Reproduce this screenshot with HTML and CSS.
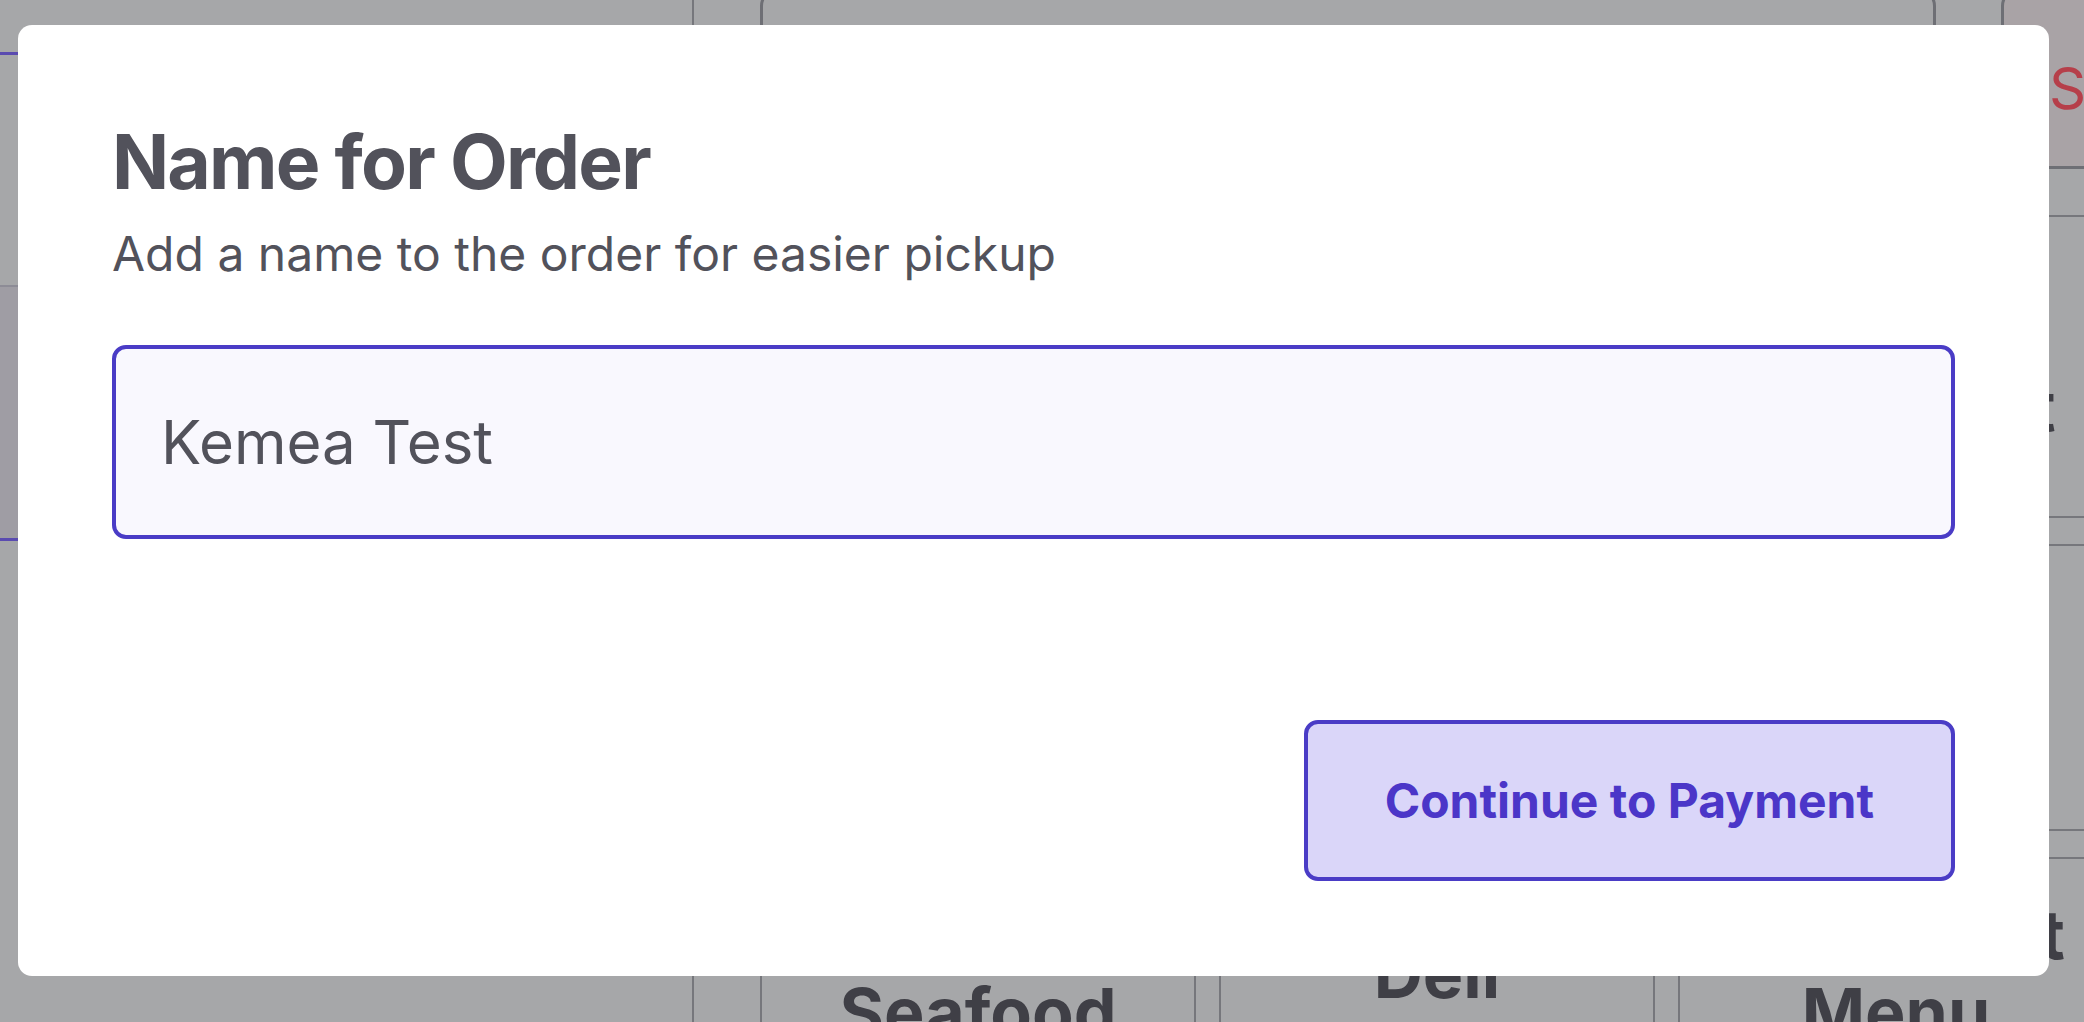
FILE: index.html
```html
<!DOCTYPE html>
<html lang="en">
<head>
<meta charset="utf-8">
<title>Name for Order</title>
<link rel="stylesheet" href="styles.css">
</head>
<body>
<div class="app">
  <aside class="sidebar">
    <div class="side-head"></div>
    <div class="side-item"></div>
    <div class="side-item side-item-selected"></div>
  </aside>
  <main class="main">
    <div class="topbar">
      <div class="search"></div>
      <div class="signout">Sign out</div>
    </div>
    <div class="tiles">
      <div class="tile">Starters</div>
      <div class="tile">Mains</div>
      <div class="tile">Hot<br>Breakfast</div>
      <div class="tile">Salads</div>
      <div class="tile">Sides</div>
      <div class="tile">Drinks</div>
      <div class="tile">Seafood</div>
      <div class="tile">Deli<br>Sandwiches</div>
      <div class="tile">Kids Treat<br>Menu<br>Items</div>
    </div>
  </main>
</div>

<div class="backdrop">
  <div class="modal" role="dialog" aria-labelledby="modal-title">
    <h2 class="modal-title" id="modal-title">Name for Order</h2>
    <p class="modal-sub">Add a name to the order for easier pickup</p>
    <input class="name-input" type="text" value="Kemea Test">
    <div class="modal-footer">
      <button class="primary-btn" type="button">Continue to Payment</button>
    </div>
  </div>
</div>
</body>
</html>
```

FILE: styles.css
```css
* { box-sizing: border-box; }

html, body {
  margin: 0;
  padding: 0;
}

body {
  width: 2084px;
  height: 1022px;
  overflow: hidden;
  background: #a6a7a9;
  font-family: Inter, "Noto Sans", "Liberation Sans", sans-serif;
}

/* ---------- dimmed page behind the dialog ---------- */
.app {
  display: grid;
  grid-template-columns: 694px 1fr;
  height: 1022px;
}

.sidebar {
  border-right: 2px solid #76777c;
  display: flex;
  flex-direction: column;
}

.side-head {
  height: 55px;
  border-bottom: 3px solid #5a4bb0;
}

.side-item {
  height: 232px;
  border-bottom: 2px solid #8d8c96;
}

.side-item-selected {
  height: 254px;
  background: #9f9da4;
  border-bottom: 3px solid #5a4bb0;
}

.main {
  padding-left: 66px;
  overflow: hidden;
}

.topbar {
  display: flex;
  gap: 65px;
  height: 181px;
  margin-top: -12px;
}

.search {
  flex: 0 0 1176px;
  border: 3px solid #6e6f75;
  border-radius: 18px;
}

.signout {
  flex: 0 0 300px;
  border: 3px solid #6e6f75;
  border-radius: 18px;
  background: #a9a3a6;
  color: #b63f4a;
  font-size: 58px;
  line-height: 1;
  padding: 68px 0 0 45px;
  white-space: nowrap;
}

.tiles {
  margin-top: 46px;
  display: grid;
  grid-template-columns: repeat(3, 436px);
  grid-template-rows: 303px 287px 309px;
  column-gap: 23px;
  row-gap: 26px;
}

.tile {
  border: 2px solid #76777c;
  border-radius: 14px;
  display: flex;
  align-items: center;
  justify-content: center;
  text-align: center;
  font-weight: 700;
  font-size: 68px;
  line-height: 78px;
  color: #3f3f46;
  white-space: nowrap;
}

/* ---------- dialog ---------- */
.backdrop {
  position: fixed;
  inset: 0;
}

.modal {
  position: absolute;
  left: 18px;
  top: 25px;
  width: 2031px;
  height: 951px;
  background: #ffffff;
  border-radius: 14px;
  padding: 92px 94px 95px;
  display: flex;
  flex-direction: column;
}

.modal-title {
  margin: 0;
  font-size: 75px;
  line-height: 90px;
  font-weight: 700;
  letter-spacing: -0.024em;
  color: #52525b;
}

.modal-sub {
  margin: 11px 0 0;
  font-size: 48px;
  line-height: 72px;
  font-weight: 400;
  color: #52525b;
}

.name-input {
  display: block;
  width: 100%;
  margin-top: 55px;
  height: 194px;
  padding: 0 45px;
  border: 4px solid #4a3cc6;
  border-radius: 14px;
  background: #f9f8fe;
  font-family: inherit;
  font-size: 60px;
  color: #52525b;
  outline: none;
}

.modal-footer {
  margin-top: auto;
  display: flex;
  justify-content: flex-end;
}

.primary-btn {
  height: 161px;
  padding: 0 77px;
  border: 4px solid #4a3cc6;
  border-radius: 14px;
  background: #dad6f9;
  color: #4b36c8;
  font-family: inherit;
  font-size: 48px;
  font-weight: 700;
}
```
